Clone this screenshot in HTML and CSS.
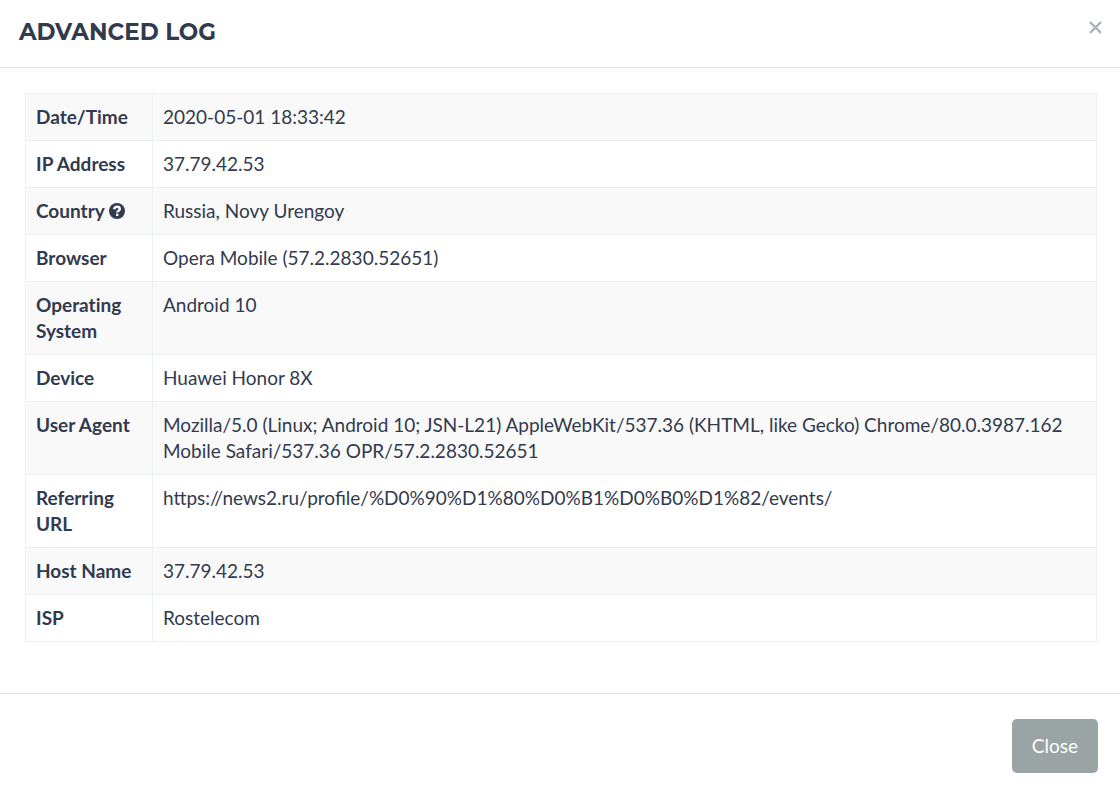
FILE: index.html
```html
<!DOCTYPE html>
<html lang="en">
  <head>
    <meta charset="utf-8" />
    <meta name="viewport" content="width=device-width, initial-scale=1" />
    <title>Advanced Log</title>
    <link rel="stylesheet" href="styles.css">
  </head>
  <body>
    <div class="modal">
      <div class="modal-header">
        <h1 class="modal-title">Advanced Log</h1>
        <button type="button" class="close" aria-label="Dismiss">
          <svg viewBox="0 0 13 13" width="13" height="13"><path d="M1 1l11 11M12 1L1 12" /></svg>
        </button>
      </div>
      <div class="modal-body">
        <table class="log">
          <tr>
            <th scope="row">Date/Time</th>
            <td>2020-05-01 18:33:42</td>
          </tr>
          <tr>
            <th scope="row">IP Address</th>
            <td>37.79.42.53</td>
          </tr>
          <tr>
            <th scope="row">Country <svg class="help" viewBox="0 0 16 16" width="16" height="16"><circle cx="8" cy="8" r="8" /><path d="M5 6.300C5.400 4.500 6.500 3.700 8 3.700c1.600 0 2.800.8 2.800 2.200 0 1.800-2.600 1.700-2.600 3.700" /><rect x="7" y="10.600" width="2.400" height="2.400" /></svg></th>
            <td>Russia, Novy Urengoy</td>
          </tr>
          <tr>
            <th scope="row">Browser</th>
            <td>Opera Mobile (57.2.2830.52651)</td>
          </tr>
          <tr>
            <th scope="row">Operating System</th>
            <td>Android 10</td>
          </tr>
          <tr>
            <th scope="row">Device</th>
            <td>Huawei Honor 8X</td>
          </tr>
          <tr>
            <th scope="row">User Agent</th>
            <td>Mozilla/5.0 (Linux; Android 10; JSN-L21) AppleWebKit/537.36 (KHTML, like Gecko) Chrome/80.0.3987.162 Mobile Safari/537.36 OPR/57.2.2830.52651</td>
          </tr>
          <tr>
            <th scope="row">Referring URL</th>
            <td>https://news2.ru/profile/%D0%90%D1%80%D0%B1%D0%B0%D1%82/events/</td>
          </tr>
          <tr>
            <th scope="row">Host Name</th>
            <td>37.79.42.53</td>
          </tr>
          <tr>
            <th scope="row">ISP</th>
            <td>Rostelecom</td>
          </tr>
        </table>
      </div>
      <div class="modal-footer">
        <button type="button" class="btn">Close</button>
      </div>
    </div>
  </body>
</html>
```
FILE: styles.css
```css
body {
  margin: 0;
  background-color: #fff;
  color: #323a4e;
  font-family: Lato, sans-serif;
  font-size: 19px;
  line-height: 26px;
}

.modal-header {
  display: flex;
  justify-content: space-between;
  align-items: flex-start;
  padding: 18px 18px 20px 19px;
  border-bottom: 1px solid #e5e5e5;
}

.modal-title {
  margin: 0;
  font-family: Montserrat, Lato, sans-serif;
  font-size: 23px;
  font-weight: 700;
  line-height: 29px;
  text-transform: uppercase;
}

.close {
  padding: 3px 0;
  border: 0;
  background: none;
  line-height: 0;
  cursor: pointer;
}

.close svg {
  fill: none;
  stroke: #adb0b8;
  stroke-width: 2.4;
}

.modal-body {
  padding: 25px 23px 51px 25px;
}

.log {
  width: 100%;
  border-collapse: collapse;
}

.log th,
.log td {
  padding: 10px;
  border: 1px solid #ecf0f1;
  text-align: left;
  vertical-align: top;
}

.log th {
  width: 106px;
  font-variant-ligatures: none;
}

.log tr:nth-child(odd) {
  background-color: #f9f9f9;
}

.help {
  vertical-align: -1px;
  fill: #323a4e;
}

.help path {
  fill: none;
  stroke: #f9f9f9;
  stroke-width: 2.4;
}

.help rect {
  fill: #f9f9f9;
}

.modal-footer {
  padding: 25px 22px 17px;
  border-top: 1px solid #e5e5e5;
  text-align: right;
}

.btn {
  padding: 14px 20px;
  border: 0;
  border-radius: 5px;
  background-color: #9aa4a5;
  color: #fff;
  font: inherit;
  cursor: pointer;
}
```
